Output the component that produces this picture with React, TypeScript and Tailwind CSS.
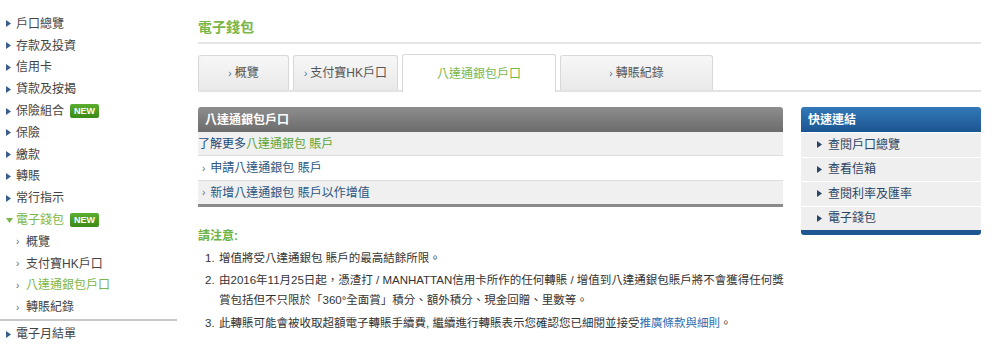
import React from "react";

const font = { fontFamily: '"Liberation Sans", "Noto Sans CJK TC", sans-serif' };

type NavItem = { label: string; sub?: boolean; active?: boolean; open?: boolean; isNew?: boolean };

const navItems: NavItem[] = [
  { label: "戶口總覽" },
  { label: "存款及投資" },
  { label: "信用卡" },
  { label: "貸款及按揭" },
  { label: "保險組合", isNew: true },
  { label: "保險" },
  { label: "繳款" },
  { label: "轉賬" },
  { label: "常行指示" },
  { label: "電子錢包", open: true, isNew: true },
  { label: "概覽", sub: true },
  { label: "支付寶HK戶口", sub: true },
  { label: "八達通銀包戶口", sub: true, active: true },
  { label: "轉賬紀錄", sub: true },
];

function NewBadge() {
  return (
    <span className="ml-[6px] inline-flex h-[14px] items-center rounded-[2px] bg-gradient-to-b from-[#5cae2e] to-[#3a8a17] px-[4px] text-[9px] font-bold leading-none text-white">
      NEW
    </span>
  );
}

function Tri({ color = "#3b5f8a" }: { color?: string }) {
  return (
    <svg width="5" height="7" viewBox="0 0 5 7" className="shrink-0">
      <path d="M0 0 L5 3.5 L0 7 Z" fill={color} />
    </svg>
  );
}

function SideNav() {
  return (
    <div className="w-[177px] shrink-0 pt-[13px]">
      {navItems.map((it, i) => (
        <div key={i} className="flex h-[21.8px] items-center text-[12px]">
          {it.sub ? (
            <>
              <span className="ml-[16px] w-[10px] text-[10px] text-[#667]">›</span>
              <span className={it.active ? "text-[#7ab648]" : "text-[#444]"}>{it.label}</span>
            </>
          ) : (
            <>
              <span className="ml-[6px] flex w-[10px] items-center">
                {it.open ? (
                  <svg width="7" height="5" viewBox="0 0 7 5">
                    <path d="M0 0 L7 0 L3.5 5 Z" fill="#7ab648" />
                  </svg>
                ) : (
                  <Tri />
                )}
              </span>
              <span className={it.open ? "text-[#7ab648]" : "text-[#444]"}>{it.label}</span>
              {it.isNew && <NewBadge />}
            </>
          )}
        </div>
      ))}
      <div className="mt-[1px] h-[2px] bg-[#c8c8c8]" />
      <div className="mt-[2px] flex h-[22px] items-center text-[12px]">
        <span className="ml-[6px] flex w-[10px] items-center">
          <Tri />
        </span>
        <span className="text-[#444]">電子月結單</span>
      </div>
    </div>
  );
}

const tabs = [
  { label: "概覽", w: "w-[91px]" },
  { label: "支付寶HK戶口", w: "w-[105px]" },
  { label: "八達通銀包戶口", w: "w-[154px]", active: true },
  { label: "轉賬紀錄", w: "w-[153px]" },
];

export default function App() {
  return (
    <div className="flex h-[344px] w-[1000px] overflow-hidden bg-white" style={font}>
      <SideNav />
      <div className="ml-[21px] w-[783px]">
        <div className="pt-[17px] text-[14px] font-bold text-[#7ab648]">電子錢包</div>
        <div className="mt-[4px] h-[2px] bg-[#e6e6e6]" />
        <div className="mt-[10px] flex items-end gap-[4px] border-b-2 border-[#e3e3e3]">
          {tabs.map((t, i) =>
            t.active ? (
              <div
                key={i}
                className={`${t.w} -mb-[2px] flex h-[38px] items-center justify-center rounded-t-[3px] border border-b-0 border-[#d8d8d8] bg-white text-[12px] text-[#7ab648]`}
              >
                {t.label}
              </div>
            ) : (
              <div
                key={i}
                className={`${t.w} flex h-[35px] items-center justify-center rounded-t-[3px] border border-b-0 border-[#d8d8d8] bg-gradient-to-b from-[#f7f7f7] to-[#e9e9e9] text-[12px] text-[#555]`}
              >
                <span className="mr-[3px] text-[10px] text-[#4a6b94]">›</span>
                {t.label}
              </div>
            )
          )}
        </div>

        <div className="mt-[15px] flex items-start gap-[18px]">
          <div className="w-[585px]">
            <div className="flex h-[25px] items-center rounded-t-[3px] bg-gradient-to-b from-[#8e8e8e] to-[#6c6c6c] pl-[7px] text-[12px] font-bold text-white">
              八達通銀包戶口
            </div>
            <div className="flex h-[24px] items-center border-b border-[#dcdcdc] bg-[#f0f0f0] text-[12px]">
              <span className="text-[#1f4a7a]">了解更多</span>
              <span className="text-[#5aa536]">八達通銀包 賬戶</span>
            </div>
            <div className="flex h-[25px] items-center border-b border-[#dcdcdc] bg-white pl-[4px] text-[12px] text-[#2b5583]">
              <span className="mr-[5px] text-[10px] text-[#667]">›</span>申請八達通銀包 賬戶
            </div>
            <div className="flex h-[23px] items-center bg-[#f0f0f0] pl-[4px] text-[12px] text-[#2b5583]">
              <span className="mr-[5px] text-[10px] text-[#667]">›</span>新增八達通銀包 賬戶以作增值
            </div>
            <div className="h-[3px] bg-[#8a8a8a]" />

            <div className="mt-[20px] text-[12px] font-bold text-[#6db33f]">請注意:</div>
            <ol className="mt-[3px] w-[600px] text-[11.5px] leading-[20px] text-[#333]">
              <li className="flex">
                <span className="w-[7px] shrink-0"></span>
                <span className="w-[14px] shrink-0">1.</span>
                <span>增值將受八達通銀包 賬戶的最高結餘所限。</span>
              </li>
              <li className="mt-[2px] flex">
                <span className="w-[7px] shrink-0"></span>
                <span className="w-[14px] shrink-0">2.</span>
                <span className="w-[570px]">
                  由2016年11月25日起，憑渣打 / MANHATTAN信用卡所作的任何轉賬 / 增值到八達通銀包賬戶將不會獲得任何獎賞包括但不只限於「360°全面賞」積分、額外積分、現金回贈、里數等。
                </span>
              </li>
              <li className="mt-[3px] flex whitespace-nowrap">
                <span className="w-[7px] shrink-0"></span>
                <span className="w-[14px] shrink-0">3.</span>
                <span>
                  此轉賬可能會被收取超額電子轉賬手續費, 繼續進行轉賬表示您確認您已細閱並接受
                  <span className="text-[#2a6cb0]">推廣條款與細則</span>。
                </span>
              </li>
            </ol>
          </div>

          <div className="w-[181px]">
            <div className="flex h-[25px] items-center rounded-t-[3px] bg-gradient-to-b from-[#3479b8] to-[#1b5591] pl-[7px] text-[12px] font-bold text-white">
              快速連結
            </div>
            {["查閱戶口總覽", "查看信箱", "查閱利率及匯率", "電子錢包"].map((l, i) => (
              <div
                key={i}
                className="flex h-[24.5px] items-center border-t border-white bg-[#efefef] pl-[16px] text-[12px] text-[#2a4466]"
              >
                <span className="mr-[6px] flex items-center">
                  <Tri color="#2a4466" />
                </span>
                {l}
              </div>
            ))}
            <div className="h-[5px] rounded-b-[3px] bg-[#1d5693]" />
          </div>
        </div>
      </div>
    </div>
  );
}
